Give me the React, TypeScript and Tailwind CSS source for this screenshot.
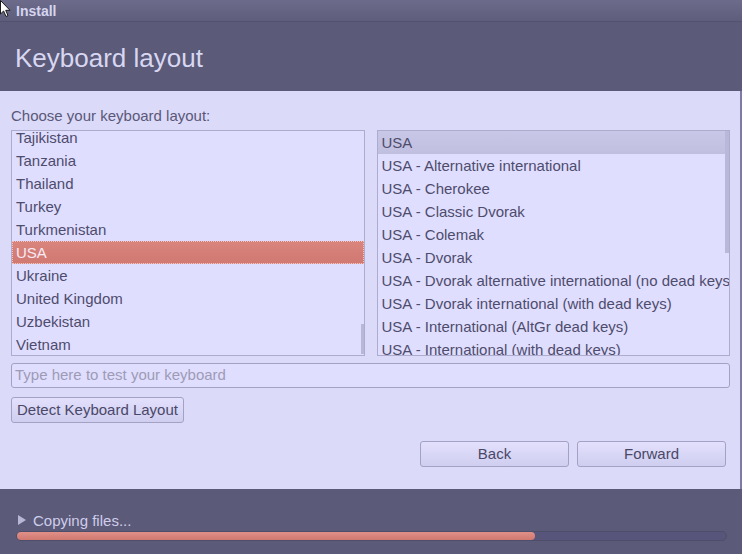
const countries = [
  "Tajikistan",
  "Tanzania",
  "Thailand",
  "Turkey",
  "Turkmenistan",
  "USA",
  "Ukraine",
  "United Kingdom",
  "Uzbekistan",
  "Vietnam",
];

const variants = [
  "USA",
  "USA - Alternative international",
  "USA - Cherokee",
  "USA - Classic Dvorak",
  "USA - Colemak",
  "USA - Dvorak",
  "USA - Dvorak alternative international (no dead keys)",
  "USA - Dvorak international (with dead keys)",
  "USA - International (AltGr dead keys)",
  "USA - International (with dead keys)",
];

function Cursor() {
  return (
    <svg className="absolute left-0 top-0" width="12" height="18" viewBox="0 0 12 18">
      <path d="M0.5 0.5 L0.5 14 L3.6 11 L6 16.5 L8 15.6 L5.7 10.3 L10 10.3 Z" fill="#ffffff" stroke="#1a1a1a" strokeWidth="1" />
    </svg>
  );
}

export default function App() {
  return (
    <div
      className="relative h-[554px] w-[742px] overflow-hidden bg-[#5b5a78]"
      style={{ fontFamily: '"Liberation Sans", Arial, sans-serif' }}
    >
      <Cursor />
      <div className="flex h-[22px] items-center border-b border-[#53526e] bg-gradient-to-b from-[#6c6b8b] to-[#5e5d7b] pl-[16px]">
        <span className="text-[14px] font-bold leading-none text-[#d6d5f0]">Install</span>
      </div>
      <div className="flex h-[69px] items-center pl-[15px] pt-[2px]">
        <h1 className="text-[26px] leading-none text-[#d8d7f2]">Keyboard layout</h1>
      </div>

      <main className="flex h-[398px] flex-col border-r-2 border-[#7d7ba3] bg-[#dcdaf9] pl-[11px] pr-[10px] pt-[16px] text-[15px] text-[#4e4c6c]">
        <p className="h-[18px] leading-[18px] text-[#5a5878]">Choose your keyboard layout:</p>

        <div className="mt-[5px] grid h-[226px] grid-cols-2 gap-[12px]">
          <div className="relative overflow-hidden border border-[#aeacce] bg-[#e0deff]">
            <ul className="-mt-[5px]">
              {countries.map((c) => (
                <li
                  key={c}
                  className={
                    c === "USA"
                      ? "h-[23px] border border-dotted border-[#f0c4c0] bg-gradient-to-b from-[#da847e] to-[#d07872] pl-[3px] leading-[21px] text-[#f6eaf4]"
                      : "h-[23px] pl-[4px] leading-[23px]"
                  }
                >
                  {c}
                </li>
              ))}
            </ul>
            <div className="absolute bottom-[1px] right-0 h-[30px] w-[3px] bg-[#b9b7d9]" />
          </div>

          <div className="relative overflow-hidden border border-[#aeacce] bg-[#e0deff]">
            <ul className="pr-[4px]">
              {variants.map((v, i) => (
                <li
                  key={v}
                  className={
                    i === 0
                      ? "h-[23px] whitespace-nowrap bg-gradient-to-b from-[#c9c7e7] to-[#c1bfdf] pl-[4px] pt-[1px] leading-[22px]"
                      : "h-[23px] whitespace-nowrap pl-[4px] pt-[1px] leading-[22px]"
                  }
                >
                  {v}
                </li>
              ))}
            </ul>
            <div className="absolute right-0 top-0 h-[122px] w-[4px] bg-[#bab8da]" />
          </div>
        </div>

        <div className="mt-[7px] flex h-[25px] items-center rounded-[3px] border border-[#a4a2c4] bg-[#e0deff] pl-[3px] pr-[2px]">
          <span className="text-[#9d9bb5]">Type here to test your keyboard</span>
        </div>

        <div className="mt-[9px]">
          <button className="h-[26px] w-[173px] rounded-[3px] border border-[#a4a2c4] bg-gradient-to-b from-[#e2e0fc] to-[#d0cef0] text-[#4a4868]">
            Detect Keyboard Layout
          </button>
        </div>

        <div className="mt-[18px] flex justify-end gap-[8px] pr-[4px]">
          <button className="h-[26px] w-[149px] rounded-[3px] border border-[#a4a2c4] bg-gradient-to-b from-[#e2e0fc] to-[#d0cef0] text-[#4a4868]">
            Back
          </button>
          <button className="h-[26px] w-[149px] rounded-[3px] border border-[#a4a2c4] bg-gradient-to-b from-[#e2e0fc] to-[#d0cef0] text-[#4a4868]">
            Forward
          </button>
        </div>
      </main>

      <div className="px-[16px] pt-[21px]">
        <div className="flex h-[20px] items-center gap-[7px] pl-[2px]">
          <svg width="8" height="10" viewBox="0 0 8 10">
            <path d="M0 0 L8 5 L0 10 Z" fill="#b8b7d6" />
          </svg>
          <span className="text-[15px] leading-none text-[#cfcdec]">Copying files...</span>
        </div>
        <div className="mt-[1px] h-[10px] w-[711px] rounded-full border border-[#4f4e6a] bg-[#57567a]">
          <div className="h-full rounded-full bg-gradient-to-b from-[#e09088] to-[#cf7870]" style={{ width: "73%" }} />
        </div>
      </div>
    </div>
  );
}
